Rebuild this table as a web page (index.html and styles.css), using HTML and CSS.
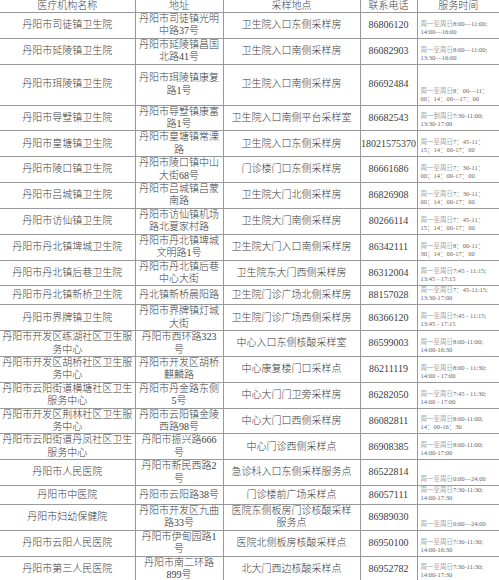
FILE: index.html
```html
<!DOCTYPE html>
<html lang="zh-CN">
<head>
<meta charset="utf-8">
<title>丹阳市核酸采样点</title>
<link rel="stylesheet" href="styles.css">
</head>
<body>
<table class="sheet">
  <colgroup>
    <col class="c-name"><col class="c-addr"><col class="c-site"><col class="c-tel"><col class="c-time">
  </colgroup>
  <thead>
    <tr class="head">
      <th>医疗机构名称</th><th>地址</th><th>采样地点</th><th>联系电话</th><th>服务时间</th>
    </tr>
  </thead>
  <tbody>
    <tr><td>丹阳市司徒镇卫生院</td><td>丹阳市司徒镇光明中路37号</td><td>卫生院入口东侧采样房</td><td class="tel">86806120</td><td class="time">周一至周日8:00—11:00;<br>14:00—16:00</td></tr>
    <tr><td>丹阳市延陵镇卫生院</td><td>丹阳市延陵镇昌国北路41号</td><td>卫生院入口南侧采样房</td><td class="tel">86082903</td><td class="time">周一至周日8:00—11:00;<br>13:30—16:00</td></tr>
    <tr class="tall"><td>丹阳市珥陵镇卫生院</td><td>丹阳市珥陵镇康复路1号</td><td>卫生院入口南侧采样房</td><td class="tel">86692484</td><td class="time">周一至周日8：00—11：<br>00；14：00—17：00</td></tr>
    <tr><td>丹阳市导墅镇卫生院</td><td>丹阳市导墅镇康富路1号</td><td>卫生院入口南侧平台采样室</td><td class="tel">86682543</td><td class="time">周一到周日7:30-11:00;<br>13:30-17:00</td></tr>
    <tr><td>丹阳市皇塘镇卫生院</td><td>丹阳市皇塘镇常溧路</td><td>卫生院入口东侧采样房</td><td class="tel">18021575370</td><td class="time">周一至周日7：45-11：<br>15；14：00-17：00</td></tr>
    <tr><td>丹阳市陵口镇卫生院</td><td>丹阳市陵口镇中山大街68号</td><td>门诊楼门口东侧采样房</td><td class="tel">86661686</td><td class="time">周一至周日7：30-11：<br>00；14：00-17：00</td></tr>
    <tr><td>丹阳市吕城镇卫生院</td><td>丹阳市吕城镇吕蒙南路</td><td>卫生院大门北侧采样房</td><td class="tel">86826908</td><td class="time">周一至周日7：30-11：<br>00；14：00-17：00</td></tr>
    <tr><td>丹阳市访仙镇卫生院</td><td>丹阳市访仙镇机场路北夏家村路</td><td>卫生院大门南侧采样房</td><td class="tel">80266114</td><td class="time">周一至周日7：45-11：<br>15；14：00-17：00</td></tr>
    <tr><td>丹阳市丹北镇埤城卫生院</td><td>丹阳市丹北镇埤城文明路1号</td><td>卫生院大门入口南侧采样房</td><td class="tel">86342111</td><td class="time">周一至周日8：00-11：<br>30；14：00-17：00</td></tr>
    <tr><td>丹阳市丹北镇后巷卫生院</td><td>丹阳市丹北镇后巷中心大街</td><td>卫生院东大门西侧采样房</td><td class="tel">86312004</td><td class="time">周一至周日7:45 - 11:15;<br>13:45 - 17:15</td></tr>
    <tr><td>丹阳市丹北镇新桥卫生院</td><td>丹北镇新桥晨阳路</td><td>卫生院门诊广场北侧采样房</td><td class="tel">88157028</td><td class="time">周一至周日7：45-11:15;<br>13:30-17:00</td></tr>
    <tr><td>丹阳市界牌镇卫生院</td><td>丹阳市界牌镇灯城大街</td><td>卫生院门诊广场西侧采样房</td><td class="tel">86366120</td><td class="time">周一至周日7:45 - 11:15;<br>13:45 - 17:15</td></tr>
    <tr><td>丹阳市开发区练湖社区卫生服务中心</td><td>丹阳市西环路323号</td><td>中心入口东侧核酸采样室</td><td class="tel">86599003</td><td class="time">周一至周日8:00-11:00;<br>14:00-16:30</td></tr>
    <tr><td>丹阳市开发区胡桥社区卫生服务中心</td><td>丹阳市开发区胡桥麒麟路</td><td>中心康复楼门口采样点</td><td class="tel">86211119</td><td class="time">周一至周日8:00 - 11:30;<br>14:00 - 17:00</td></tr>
    <tr><td>丹阳市云阳街道横塘社区卫生服务中心</td><td>丹阳市丹金路东侧5号</td><td>中心大门门卫旁采样房</td><td class="tel">86282050</td><td class="time">周一至周日7:45 - 11:30;<br>14:00 - 17:00</td></tr>
    <tr><td>丹阳市开发区荆林社区卫生服务中心</td><td>丹阳市云阳镇金陵西路98号</td><td>中心大门口西侧采样房</td><td class="tel">86082811</td><td class="time">周一至周日8:00-11:00;<br>14：00-16：30</td></tr>
    <tr><td>丹阳市云阳街道丹凤社区卫生服务中心</td><td>丹阳市振兴路666号</td><td>中心门诊西侧采样点</td><td class="tel">86908385</td><td class="time">周一至周日8:00-11:00;<br>14:00-17:00</td></tr>
    <tr><td>丹阳市人民医院</td><td>丹阳市新民西路2号</td><td>急诊科入口东侧采样服务点</td><td class="tel">86522814</td><td class="time">周一至周日0:00—24:00</td></tr>
    <tr><td>丹阳市中医院</td><td>丹阳市云阳路38号</td><td>门诊楼前广场采样点</td><td class="tel">86057111</td><td class="time">周一至周日7:30-11:30;<br>14:00-17:30</td></tr>
    <tr><td>丹阳市妇幼保健院</td><td>丹阳市开发区九曲路33号</td><td>医院东侧板房门诊核酸采样服务点</td><td class="tel">86989030</td><td class="time">周一至周日0:00—24:00</td></tr>
    <tr><td>丹阳市云阳人民医院</td><td>丹阳市伊甸园路1号</td><td>医院北侧板房核酸采样点</td><td class="tel">86950100</td><td class="time">周一至周日7:30-11:30;<br>14:00-16:30</td></tr>
    <tr><td>丹阳市第三人民医院</td><td>丹阳市南二环路899号</td><td>北大门西边核酸采样点</td><td class="tel">86952782</td><td class="time">周一至周日7:30-11:30;<br>14:00-17:30</td></tr>
  </tbody>
</table>
</body>
</html>
```
FILE: styles.css
```css
html, body {
  margin: 0;
  padding: 0;
  background: #ffffff;
}

.sheet {
  border-collapse: collapse;
  table-layout: fixed;
  width: 499px;
  font-family: "Liberation Serif", "Noto Sans CJK SC", serif;
  font-size: 10px;
  color: #3c3c3c;
}

.c-name { width: 135px; }
.c-addr { width: 88px; }
.c-site { width: 137px; }
.c-tel  { width: 57px; }
.c-time { width: 82px; }

.sheet th,
.sheet td {
  border: 1px solid #9a9a9a;
  text-align: center;
  vertical-align: middle;
  line-height: 12.4px;
  padding: 0 2px;
  font-weight: 300;
}

.sheet th:first-child,
.sheet td:first-child {
  border-left: none;
}

.sheet th:last-child,
.sheet td:last-child {
  border-right: none;
}

.head th {
  border-top: none;
  height: 12px;
  line-height: 12px;
  font-weight: 300;
  color: #444;
}

.sheet td:nth-child(2) {
  padding: 0 3px;
}

.sheet td:nth-child(3) {
  padding: 0 4px;
}

.sheet td.tel {
  padding: 0;
  white-space: nowrap;
  overflow: visible;
}

.sheet td.time {
  text-align: left;
  vertical-align: bottom;
  font-size: 6.5px;
  line-height: 8px;
  color: #666;
  padding: 0 1px 2px 3px;
  white-space: nowrap;
  overflow: hidden;
}

.tall td {
  height: 38px;
}
```
